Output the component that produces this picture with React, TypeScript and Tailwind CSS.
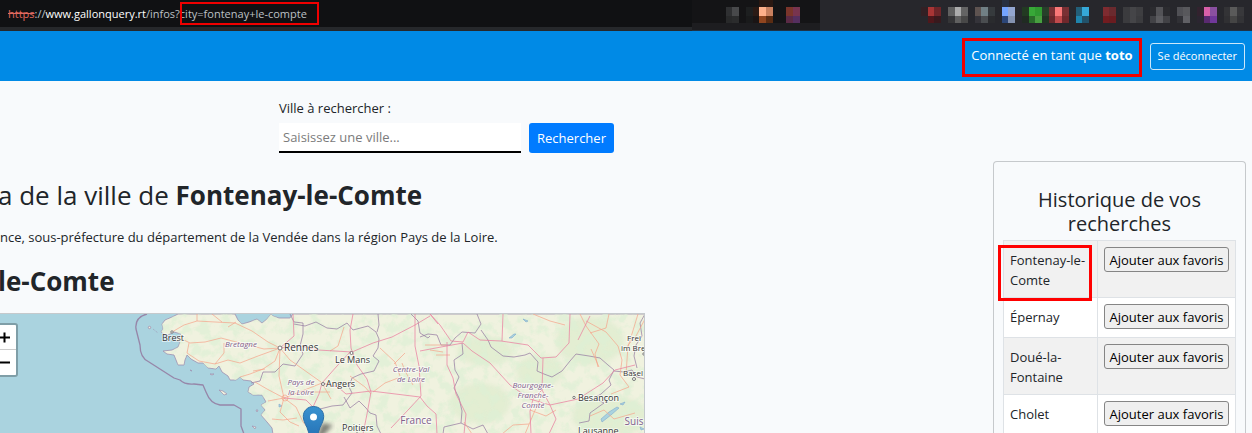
import { useId } from "react";

type Cell = [column: number, top: string, bottom: string];

const mosaic: Cell[] = [
  [0, "#2f3032", "#28292a"],
  [1, "#48494b", "#2b2c2d"],
  [3, "#1d1f20", "#191a1b"],
  [4, "#2a1a15", "#1a1414"],
  [5, "#ffb08a", "#90451f"],
  [6, "#c9805f", "#5a2c13"],
  [9, "#7a352b", "#5a2a45"],
  [10, "#78344f", "#552f60"],
  [29, "#322024", "#27272c"],
  [30, "#a83535", "#4f171b"],
  [31, "#6e2529", "#38191d"],
  [33, "#606060", "#353537"],
  [34, "#acacac", "#606060"],
  [35, "#646464", "#484848"],
  [37, "#5e5350", "#35343a"],
  [38, "#718085", "#4a4d50"],
  [39, "#363a3d", "#2a2b2e"],
  [41, "#74a4ff", "#2c4678"],
  [42, "#94a6d0", "#8492b0"],
  [44, "#223a22", "#202b22"],
  [45, "#38a838", "#2a6c2a"],
  [46, "#309a30", "#48a040"],
  [47, "#27402a", "#203424"],
  [48, "#7a3034", "#6a282c"],
  [49, "#fa7878", "#c04a4c"],
  [50, "#7a3034", "#70282c"],
  [52, "#235f78", "#1f84ac"],
  [53, "#35a8d8", "#22526a"],
  [56, "#7e2b30", "#721c20"],
  [57, "#6a2a2e", "#6a1c20"],
  [59, "#3b3b3e", "#3b3b3e"],
  [60, "#454548", "#454548"],
  [61, "#3e3e41", "#3b3b3e"],
  [63, "#2b2b2f", "#424246"],
  [64, "#535357", "#5c5c60"],
  [65, "#2b2b2f", "#424246"],
  [67, "#505055", "#303035"],
  [68, "#58585c", "#606065"],
  [70, "#32222e", "#2b2530"],
  [71, "#d85fa8", "#5a2a70"],
  [72, "#8a50a0", "#70389a"],
  [74, "#333336", "#303033"],
  [75, "#5a5a5a", "#454545"],
  [76, "#38383b", "#333336"],
];

const history = ["Fontenay-le-Comte", "Épernay", "Doué-la-Fontaine", "Cholet"];

function BrowserBar() {
  return (
    <div className="flex h-[31px] bg-[#27272c]">
      <div className="flex-1 border-b-4 border-[#26282b] bg-[#101113] pl-2 text-[11px] leading-[27px] whitespace-nowrap text-[#bdc1c6]">
        <s className="text-[#e0695f]">https</s>
        ://<span className="text-white">www.gallonquery.rt</span>/infos?
        <span className="relative">
          city=fontenay+le-compte
          <span className="absolute -inset-y-1 -right-3 left-0 border-2 border-[#f00000]" />
        </span>
      </div>
      <svg width="560" height="31" viewBox="692 0 560 31" aria-hidden="true">
        <rect x="692" width="128" height="31" fill="#141416" />
        <rect x="692" y="23" width="128" height="8" fill="#1d1d20" />
        <rect x="820" width="432" height="31" fill="#27272c" />
        <rect x="692" y="30" width="560" height="1" fill="#1f3346" />
        <rect x="759" y="0" width="14" height="7" fill="#2a1812" />
        <rect x="1002" y="0" width="7" height="7" fill="#283040" />
        <g shapeRendering="crispEdges">
          {mosaic.map(([column, top, bottom]) => (
            <g key={column}>
              <rect x={725.7 + column * 6.73} y="7" width="7" height="9" fill={top} />
              <rect x={725.7 + column * 6.73} y="16" width="7" height="7" fill={bottom} />
            </g>
          ))}
        </g>
      </svg>
    </div>
  );
}

function FranceMap() {
  const id = useId();
  const land =
    "M178 313L172 316L165 319L162 323L163 328L161 331L166 335L170 333L174 331L181 333L179 337L175 339L180 341L178 346L172 349L163 350L167 353L174 354L176 359L178 364L184 364L185 359L187 354L191 358L198 362L203 362L208 367L216 368L219 365L222 371L228 375L230 379L236 379L240 376L243 379L251 380L254 383L249 386L248 391L253 394L262 394L266 401L261 404L265 409L261 414L267 421L272 427L274 440L274 493L645 493L645 313L293 313L290 317L279 317L273 315L271 313L267 318L262 322L257 318L249 321L242 323L238 319L235 313Z";
  return (
    <svg
      className="absolute top-0 left-0"
      width="645"
      height="180"
      viewBox="0 313 645 180"
      role="img"
      aria-label="Carte"
    >
      <defs>
        <filter id={`${id}woods`} x="0" y="0" width="100%" height="100%">
          <feTurbulence type="fractalNoise" baseFrequency="0.09" numOctaves="4" seed="8" />
          <feColorMatrix values="0 0 0 0 0.72  0 0 0 0 0.87  0 0 0 0 0.66  5 0 0 0 -2.3" />
        </filter>
        <clipPath id={`${id}land`}>
          <path d={land} />
        </clipPath>
        <linearGradient id={`${id}pin`} x1="0" y1="0" x2="0" y2="1">
          <stop offset="0" stopColor="#3a93d0" />
          <stop offset="1" stopColor="#1f68ae" />
        </linearGradient>
        <filter id={`${id}soft`}>
          <feGaussianBlur stdDeviation="2" />
        </filter>
      </defs>
      <rect y="313" width="645" height="180" fill="#aad3df" />
      <path d={land} fill="#f0f2df" stroke="#9d8fb0" strokeWidth="0.8" />
      <g clipPath={`url(#${id}land)`}>
        <g fill="#d3e8c4" opacity="0.45" filter={`url(#${id}soft)`}>
          <ellipse cx="590" cy="340" rx="34" ry="24" />
          <ellipse cx="480" cy="402" rx="30" ry="20" />
          <ellipse cx="485" cy="350" rx="28" ry="14" />
          <ellipse cx="540" cy="370" rx="24" ry="16" />
          <ellipse cx="610" cy="415" rx="38" ry="20" />
        </g>
        <rect y="313" width="645" height="180" filter={`url(#${id}woods)`} opacity="0.7" />
      </g>
      <g fill="#f1f0dc" stroke="#9d8fb0" strokeWidth="0.7">
        <path d="M148 326l2-1 1 2-2 1zM219 389l4 1 4 3-3 1zM210 373l4 0-2 1zM190 369l2 1zM252 425l4 1-1 2zM256 409l2 0-1 2z" />
        <path d="M153 328l5 4" strokeDasharray="1 1" fill="none" />
      </g>
      <g fill="#aad3df" stroke="#7fa9cc" strokeWidth="0.6">
        <path d="M601 418l8-7 8-5 2 1-8 7-9 7zM523 318l5 2-2 1zM509 337l5-4 2 0-4 4zM640 426l4 2-3 1zM279 403l3 2-3 1zM620 403l5-2-2 3z" />
      </g>
      <g fill="none" stroke="#93789f" strokeWidth="1.3" strokeOpacity="0.85" strokeLinejoin="round">
        <path d="M147 313C139 315 135 320 136 328L140 344C140 352 142 358 149 361L174 377L180 379C185 384 190 383 194 383L203 384L206 391C209 399 213 403 220 404L234 404L241 408L241 425L244 433" />
        <path
          d="M290 313L294 321L303 322L303 333L300 345L303 353L295 365L283 363L275 371L263 371L260 380L251 382M294 323L305 325L316 321L327 327L337 328L347 322L353 329L368 325L376 331L379 338L378 347L373 355L379 360L374 370L361 373L352 377L349 386L352 392L343 404L332 405L320 408L313 416M377 331L379 324L378 313M344 396L350 407L359 400L366 407L370 412L376 414L377 425L381 433M411 313L418 320L420 332L428 337L430 335"
          strokeOpacity="0.7"
          strokeWidth="1"
        />
        <path
          d="M420 336L428 333L437 334L441 344L450 344L455 337L462 331L475 332L481 323L477 313M481 329L488 339L491 346L503 355L514 356L525 354L530 352L538 361L537 370L544 373L552 376L562 370L570 360L576 353L589 355L600 357L608 364L614 369L609 379L611 384L601 393L594 397L604 402L590 412L589 420L579 422M462 342L463 353L454 359L455 369L459 376L454 387L459 397L462 410L461 422L444 426L443 433M461 422L473 428L483 424L488 433M614 370L624 371L632 369L637 376L645 378M645 313L640 322L642 335L636 344L634 355L637 367"
          strokeOpacity="0.7"
          strokeWidth="1"
        />
      </g>
      <g fill="none" stroke="#f5a48c" strokeWidth="0.9" strokeOpacity="0.8" strokeLinejoin="round">
        <path d="M172 331L184 324L197 320L215 321L235 322L252 330L268 341L280 347M178 336L190 342L205 341L221 337L240 342L264 348L280 347M189 342L187 352L199 360L215 363L228 359L240 362L258 355L280 347M197 320L197 313M236 321L228 326M280 347L275 360L263 368L250 373L240 376M280 347L279 375L284 397M215 363L224 352L224 342M280 347L290 359L297 364L321 381M284 397L267 388L255 381M284 397L268 400M284 397L296 406L303 421L313 433M284 397L280 411L290 421L299 425M272 418L283 419L297 417M253 370L265 368M212 313L222 321" />
        <path d="M284 397L302 390L322 382M322 382L331 398M302 391L330 391M350 375L365 386L371 393M344 326L338 345L330 350M380 347L395 361L400 375M405 352L394 363M413 384L405 370L402 362M373 391L385 382L398 377M430 349L443 351M425 344L446 344M436 354L450 354M580 313L586 325L599 343L595 353L598 366M599 366L591 348M609 313L606 327L590 332M645 318L636 335L628 344L626 374M638 313L628 346M586 320L606 331L618 345L622 359L620 374L629 386L611 393M590 415L604 409L614 418L635 412M502 433L513 424L529 423M464 421L472 433M530 409L546 415L556 409M540 398L533 414L525 433M533 313L550 320L565 324" />
        <circle cx="285" cy="397" r="3" />
      </g>
      <g fill="none" stroke="#e980a0" strokeWidth="1" strokeOpacity="0.75" strokeLinejoin="round">
        <path d="M280 347L301 345L318 349L352 351L373 342L392 336L415 324L430 315M353 313L350 329L351 347L357 364L367 378L371 391L367 413L363 433M351 350L337 365L322 382M322 382L338 386L346 393L371 390L420 396L427 405L436 413L437 433M284 397L306 399L313 406L319 393L322 382M293 313L294 335L280 347M415 313L415 345L419 365L421 395L409 408L391 427M430 313L440 324L451 340L463 341L468 331L480 339L501 340L528 344L541 357L556 356L569 342L570 313M420 350L441 346L463 342L472 350L490 362L510 384L530 398L550 404L578 398L603 382L615 369L635 364M447 341L447 364L453 377L456 393L466 413L464 433M503 313L502 340M543 357L542 389L550 404L556 418L549 433M531 433L530 410L533 398L543 388M590 315L578 339M430 313L438 323" />
      </g>
      <g fill="#fff" stroke="#777" strokeWidth="1">
        <circle cx="280" cy="347" r="2" />
        <circle cx="351.500" cy="352" r="1.500" />
        <circle cx="323" cy="383" r="1.500" />
        <circle cx="574" cy="396.500" r="1.200" />
        <circle cx="172" cy="331" r="1.200" />
        <circle cx="634" cy="378" r="1.500" />
        <circle cx="644" cy="353" r="1.200" />
        <circle cx="357" cy="433" r="1.200" />
      </g>
      <g
        fontSize="9"
        fill="#363636"
        stroke="#fff"
        strokeWidth="2"
        strokeOpacity="0.6"
        paintOrder="stroke"
      >
        <text x="162" y="340">Brest</text>
        <text x="284" y="350" fontSize="10">Rennes</text>
        <text x="335" y="362">Le Mans</text>
        <text x="326" y="386">Angers</text>
        <text x="342" y="430">Poitiers</text>
        <text x="578" y="400">Besançon</text>
        <text x="578" y="433">Lausanne</text>
        <text x="627" y="340" fontSize="8">Frei</text>
        <text x="621" y="350" fontSize="8">im Bre</text>
        <text x="623" y="375" fontSize="8">Basel</text>
      </g>
      <g
        fontSize="8"
        fontStyle="italic"
        fill="#80608c"
        textAnchor="middle"
        stroke="#fff"
        strokeWidth="2"
        strokeOpacity="0.6"
        paintOrder="stroke"
      >
        <text x="241" y="346">Bretagne</text>
        <text x="301" y="384">Pays de</text>
        <text x="301" y="394">la Loire</text>
        <text x="411" y="371">Centre-Val</text>
        <text x="411" y="381">de Loire</text>
        <text x="533" y="387">Bourgogne-</text>
        <text x="533" y="397">Franche-</text>
        <text x="533" y="407">Comté</text>
        <text x="416" y="423" fontSize="10" fontStyle="normal">France</text>
        <text x="634" y="424" fontSize="10" fontStyle="normal">Suis</text>
      </g>
      <path d="M313 446L322 422L333 424Z" fill="#333" opacity="0.6" filter={`url(#${id}soft)`} />
      <path
        d="M313.500 405.500C307.500 405.500 303.300 410 303.300 415.500C303.300 419 305 422.500 307 426.500L313.500 446L320 426.500C322 422.500 323.700 419 323.700 415.500C323.700 410 319.500 405.500 313.500 405.500Z"
        fill={`url(#${id}pin)`}
        stroke="#2b6fa8"
      />
      <circle cx="313.500" cy="416" r="3.500" fill="#fff" />
    </svg>
  );
}

export default function App() {
  return (
    <div className="flex min-h-screen flex-col overflow-x-hidden bg-[#f8fafc] font-['Open_Sans','Noto_Sans',sans-serif] text-[13px] leading-5 text-[#212529]">
      <BrowserBar />

      <header className="flex h-[50px] items-center justify-end gap-2 bg-[#008ae6] pr-[7px] text-white">
        <p className="mt-[3px] h-[39px] border-[3px] border-[#f00000] px-1.5 pt-1">
          Connecté en tant que <strong>toto</strong>
        </p>
        <button className="h-[27px] rounded-[3px] border border-white/80 px-[7px] text-[11px]">
          Se déconnecter
        </button>
      </header>

      <div className="flex flex-1">
        <main className="flex min-w-0 flex-1 flex-col">
          <form
            className="flex items-end gap-2 pt-[17px] pl-[279px]"
            onSubmit={(event) => event.preventDefault()}
          >
            <div className="flex flex-col gap-[5px]">
              <label htmlFor="city">Ville à rechercher :</label>
              <input
                id="city"
                className="h-[30px] w-[242px] border-b-2 border-black bg-white px-1 placeholder:text-[#7b7b7b]"
                placeholder="Saisissez une ville..."
              />
            </div>
            <button className="h-[30px] rounded-[3px] bg-[#007bff] px-2 text-white">
              Rechercher
            </button>
          </form>

          <h1 className="mt-6 -ml-0.5 text-[26px] leading-9 whitespace-nowrap">
            a de la ville de <strong>Fontenay-le-Comte</strong>
          </h1>
          <p className="mt-3.5 whitespace-nowrap">
            nce, sous-préfecture du département de la Vendée dans la région Pays de la Loire.
          </p>
          <h2 className="mt-4 -ml-0.5 text-[26px] leading-9 font-bold">le-Comte</h2>

          <div className="relative mt-3.5 w-full max-w-[645px] flex-1 overflow-hidden border-t border-r border-[#c5c9cc]">
            <FranceMap />
            <div className="relative mt-[9px] flex w-[18px] flex-col rounded-r-[3px] border-2 border-l-0 border-black/25 bg-white bg-clip-padding">
              <button aria-label="Zoomer" className="flex h-[25px] items-center border-b border-[#ccc]">
                <svg width="11" height="11" viewBox="0 0 11 11" stroke="#000" strokeWidth="2">
                  <path d="M0 5.500H10M4.500 0.500V10.500" />
                </svg>
              </button>
              <button aria-label="Dézoomer" className="flex h-[25px] items-center">
                <svg width="11" height="11" viewBox="0 0 11 11" stroke="#000" strokeWidth="2">
                  <path d="M0 5.500H10" />
                </svg>
              </button>
            </div>
          </div>
        </main>

        <aside className="mt-20 mr-1.5 w-[253px] rounded-t border border-b-0 border-[#c6c9cc] px-[9px] pt-[26px]">
          <h3 className="text-center text-xl leading-6 font-medium">Historique de vos recherches</h3>
          <table className="mt-1 w-full border-collapse">
            <tbody>
              {history.map((city, index) => (
                <tr key={city} className="align-top odd:bg-[#f1f1f1] even:bg-white">
                  <td className="relative border border-[#dee2e6] px-1.5 pt-[9px] pb-[7px]">
                    {city}
                    {index === 0 && (
                      <span className="absolute top-1 right-[5px] -left-1.5 h-14 border-[3px] border-[#ff0000]" />
                    )}
                  </td>
                  <td className="w-[138px] border border-[#dee2e6] px-1.5 pt-1.5 pb-2">
                    <button className="h-[25px] w-full rounded-[3px] border border-[#858585] bg-[#efefef] whitespace-nowrap text-black">
                      Ajouter aux favoris
                    </button>
                  </td>
                </tr>
              ))}
            </tbody>
          </table>
        </aside>
      </div>
    </div>
  );
}
